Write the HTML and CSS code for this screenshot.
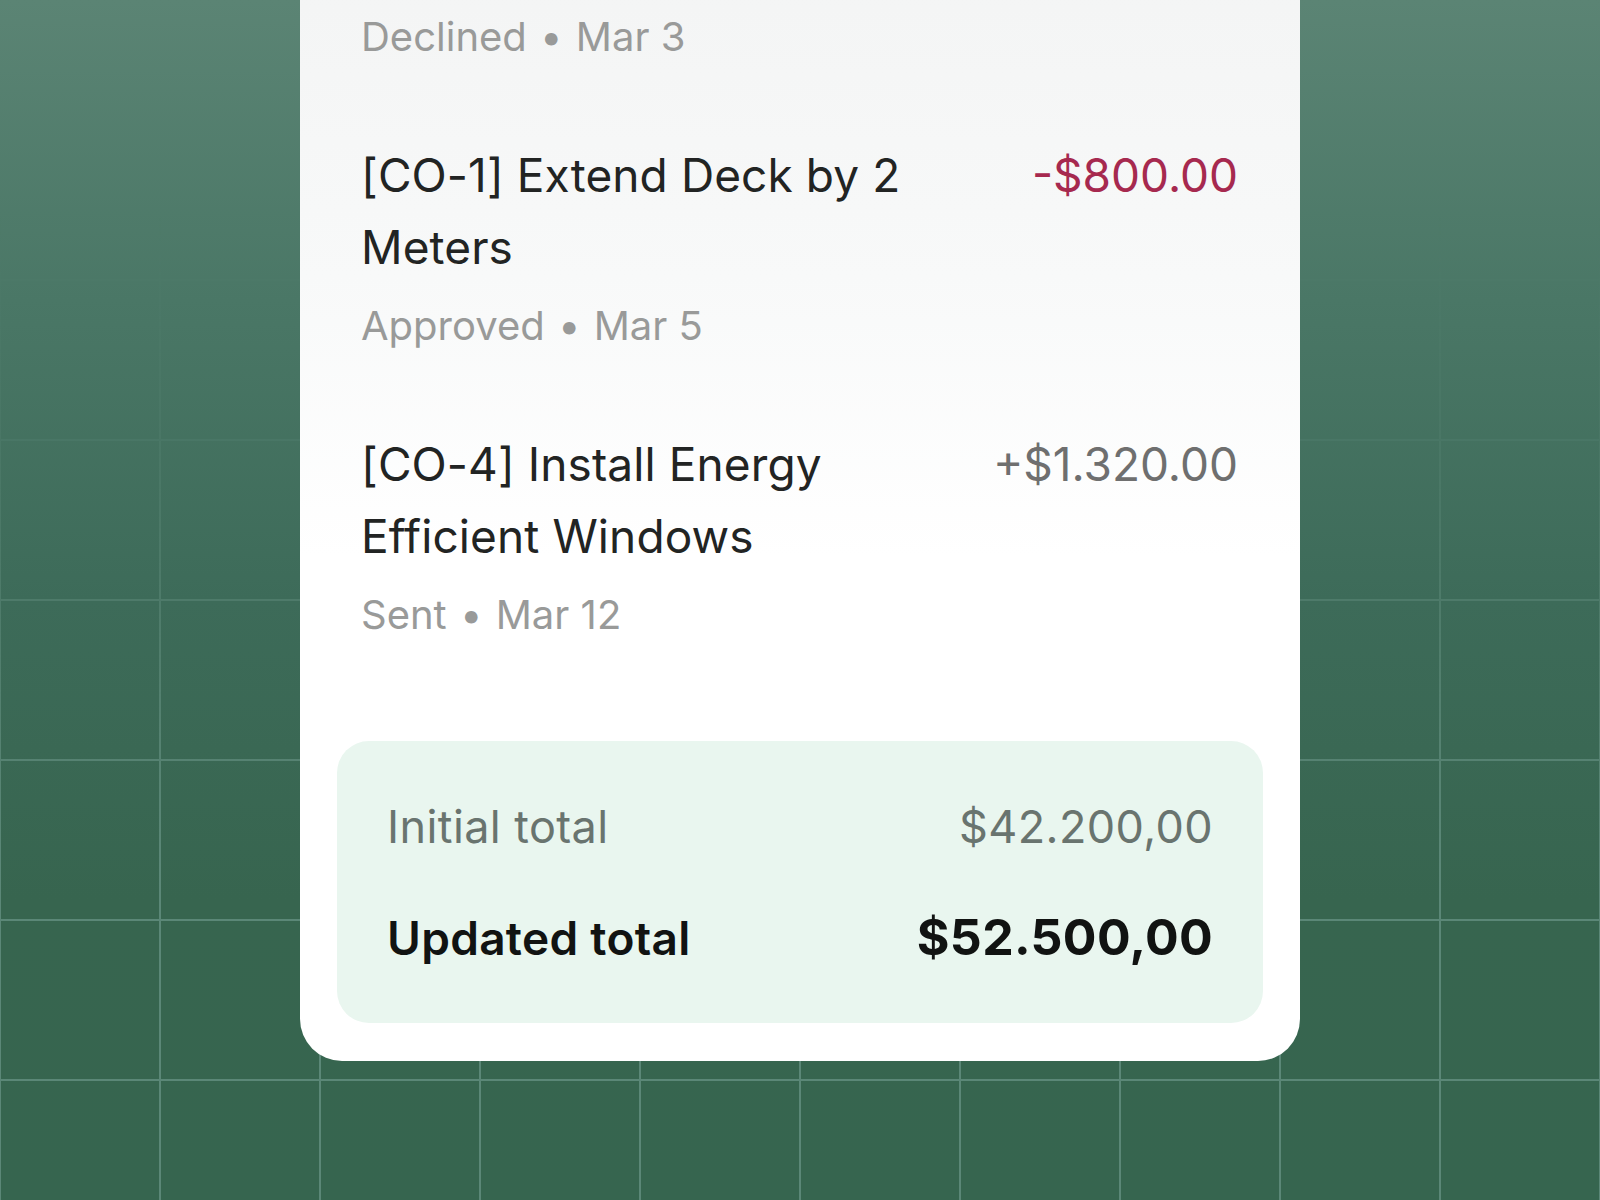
FILE: index.html
```html
<!DOCTYPE html>
<html lang="en">
<head>
<meta charset="utf-8">
<title>Change orders</title>
<link rel="stylesheet" href="styles.css">
</head>
<body>
<div class="stage">
  <div class="card">
    <div class="item">
      <div class="meta">Declined <span class="dot">•</span> Mar 3</div>
    </div>
    <div class="item">
      <div class="item-head">
        <div class="title">[CO-1] Extend Deck by 2 Meters</div>
        <div class="amount neg">-$800.00</div>
      </div>
      <div class="meta">Approved <span class="dot">•</span> Mar 5</div>
    </div>
    <div class="item">
      <div class="item-head">
        <div class="title">[CO-4] Install Energy Efficient Windows</div>
        <div class="amount">+$1.320.00</div>
      </div>
      <div class="meta">Sent <span class="dot">•</span> Mar 12</div>
    </div>
    <div class="summary">
      <div class="sum-row">
        <span class="sum-label">Initial total</span>
        <span class="sum-value">$42.200,00</span>
      </div>
      <div class="sum-row strong">
        <span class="sum-label">Updated total</span>
        <span class="sum-value">$52.500,00</span>
      </div>
    </div>
  </div>
</div>
</body>
</html>
```
FILE: styles.css
```css
* { box-sizing: border-box; }
html, body { margin: 0; padding: 0; }
body {
  width: 1600px;
  height: 1200px;
  overflow: hidden;
  font-family: Inter, "Noto Sans", "Liberation Sans", sans-serif;
  background: #36654f;
}
.stage {
  position: relative;
  width: 1600px;
  height: 1200px;
  overflow: hidden;
  background: linear-gradient(to bottom, #5b8474 0%, #4a7766 25%, #3d6b59 50%, #37654f 75%, #36654f 100%);
}
.stage::before {
  content: "";
  position: absolute;
  inset: 0;
  background-image:
    linear-gradient(to right, #5b8777 0, #5b8777 2px, transparent 2px),
    linear-gradient(to bottom, #5b8777 0, #5b8777 2px, transparent 2px);
  background-size: 160px 160px;
  background-position: -1px -41px;
  -webkit-mask-image: linear-gradient(to bottom, transparent 18%, rgba(0,0,0,0.25) 36%, rgba(0,0,0,0.8) 60%, #000 72%);
  mask-image: linear-gradient(to bottom, transparent 18%, rgba(0,0,0,0.25) 36%, rgba(0,0,0,0.8) 60%, #000 72%);
}
.card {
  position: relative;
  width: 1000px;
  margin: -60px 0 0 300px;
  padding: 69px 62px 38px 61px;
  border-radius: 42px;
  background: linear-gradient(to bottom, #f3f4f4 0%, #f8f9f9 30%, #ffffff 55%);
}
.item + .item { margin-top: 75px; }
.item-head {
  display: flex;
  align-items: flex-start;
  gap: 40px;
}
.title {
  flex: 1;
  font-size: 46px;
  line-height: 72px;
  color: #222423;
  letter-spacing: 0.1px;
}
.amount {
  font-size: 46px;
  line-height: 72px;
  color: #6f6f6f;
  white-space: nowrap;
}
.amount.neg { color: #a6294f; }
.meta {
  margin-top: 15px;
  font-size: 40px;
  line-height: 55px;
  color: #999a99;
}
.item:first-child .meta { margin-top: 0; }
.dot {
  display: inline-block;
  margin: 0 2px;
  font-size: 40px;
}
.summary {
  margin: 99px -25px 0 -24px;
  padding: 61px 50px 55px;
  border-radius: 32px;
  background: #e9f6ef;
}
.sum-row {
  display: flex;
  justify-content: space-between;
  align-items: baseline;
  font-size: 45px;
  line-height: 50px;
  letter-spacing: 0.4px;
  color: #69746f;
}
.sum-row.strong {
  margin-top: 55px;
  line-height: 60px;
  color: #111312;
  font-weight: 600;
  letter-spacing: 0.3px;
}
.sum-row.strong .sum-label { font-size: 46px; }
.sum-row.strong .sum-value { font-size: 50px; font-weight: 700; }
```
